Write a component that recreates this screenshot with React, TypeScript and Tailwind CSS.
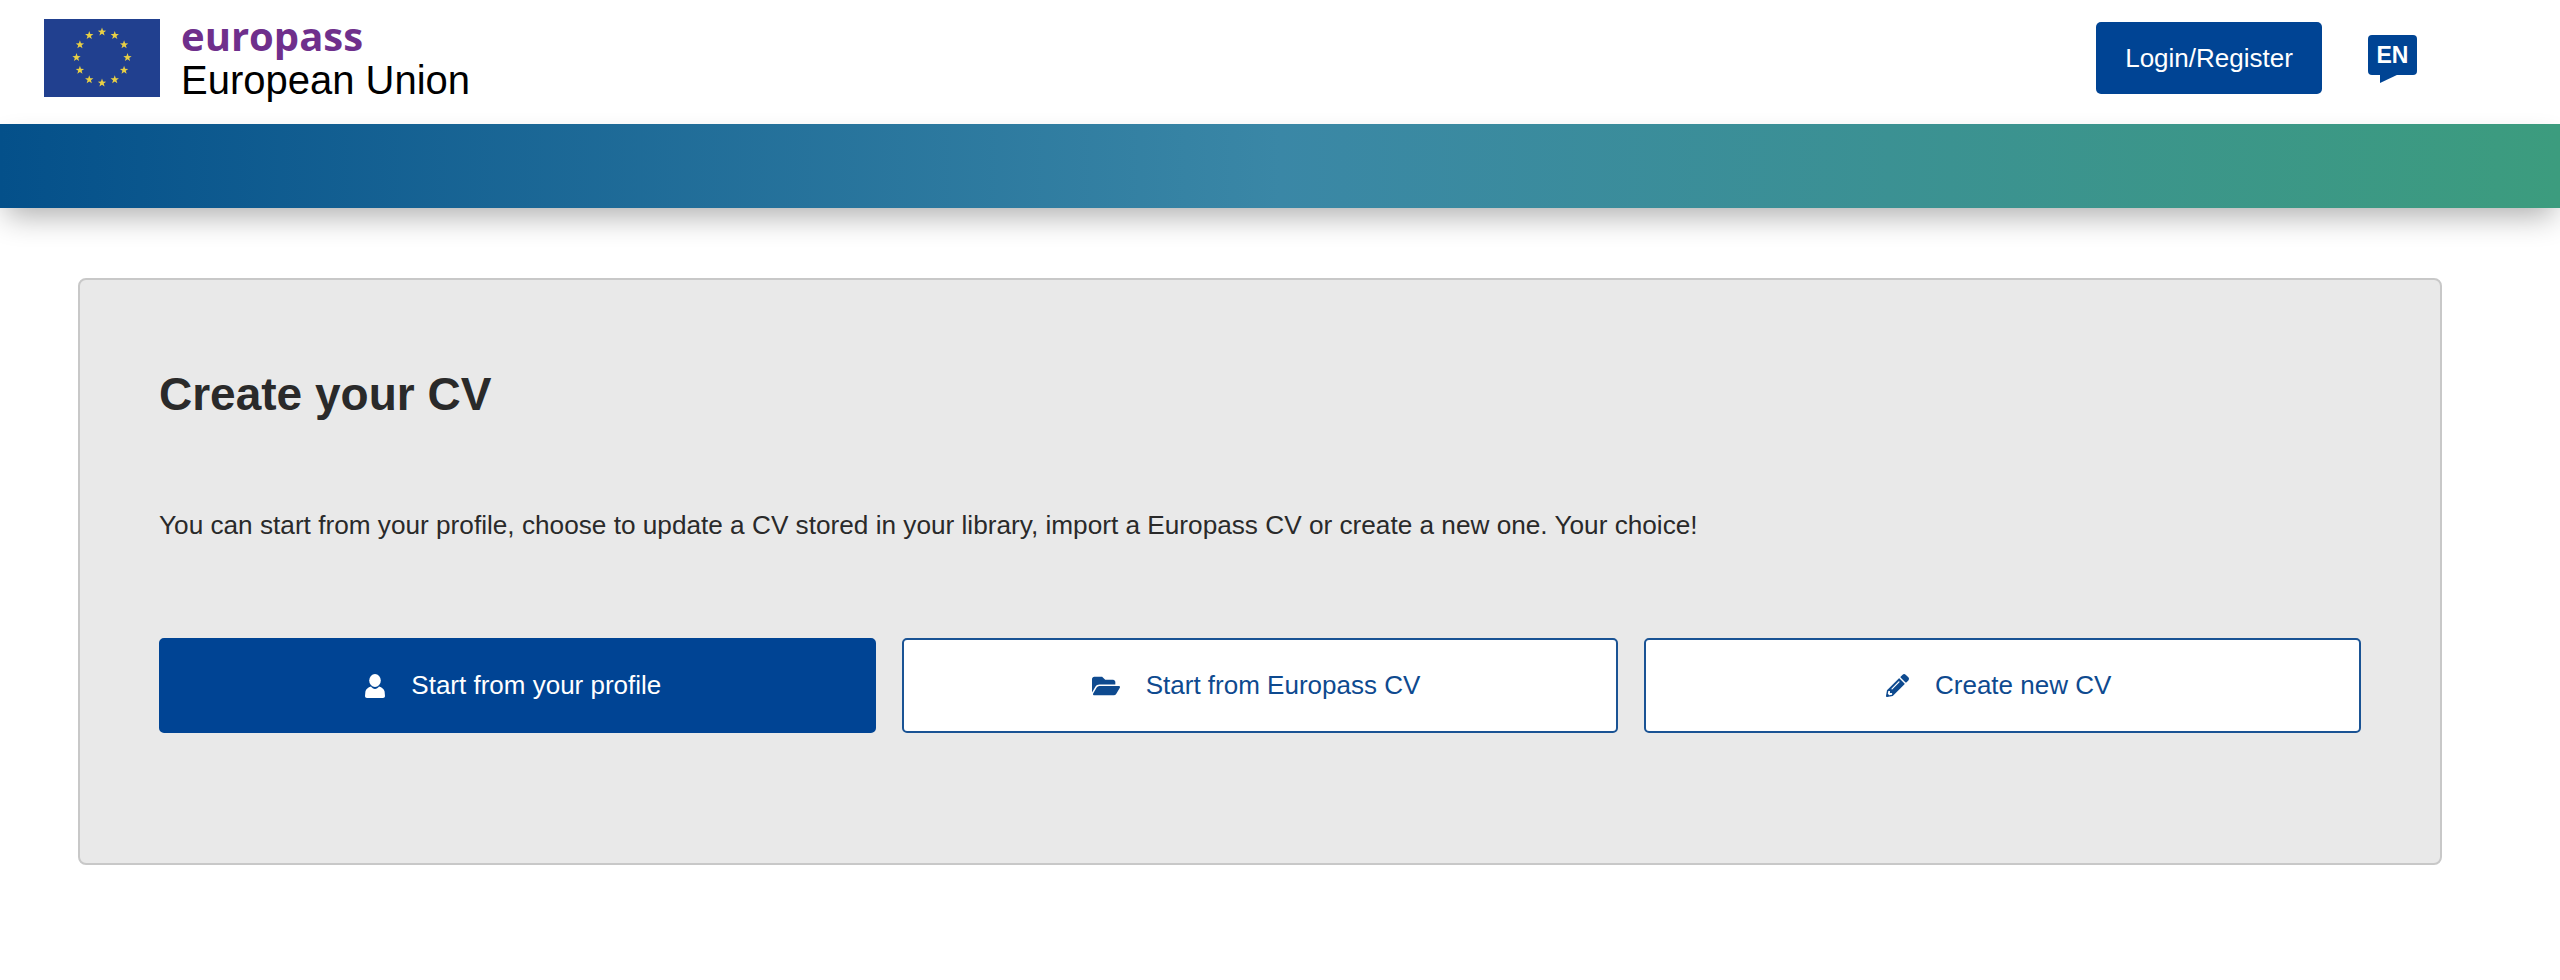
import React from 'react';
import { FaFolderOpen, FaPencilAlt } from 'react-icons/fa';

const starPoints = (cx: number, cy: number, outer: number, inner: number) => {
    const pts: string[] = [];
    for (let i = 0; i < 10; i++) {
        const r = i % 2 === 0 ? outer : inner;
        const a = (Math.PI / 5) * i - Math.PI / 2;
        pts.push(`${(cx + r * Math.cos(a)).toFixed(2)},${(cy + r * Math.sin(a)).toFixed(2)}`);
    }
    return pts.join(' ');
};

const EuFlag = () => (
    <svg width="116" height="78" viewBox="0 0 116 78" className="shrink-0">
        <rect width="116" height="78" fill="#21408f" />
        {Array.from({ length: 12 }).map((_, i) => {
            const a = (Math.PI / 6) * i;
            return (
                <polygon
                    key={i}
                    points={starPoints(58 + 25.5 * Math.sin(a), 38.5 - 25.5 * Math.cos(a), 4.4, 1.8)}
                    fill="#e8cf45"
                />
            );
        })}
    </svg>
);

const UserIcon = () => (
    <svg width="20" height="24" viewBox="0 0 20 24" fill="currentColor" className="shrink-0">
        <ellipse cx="10" cy="6.5" rx="5.8" ry="6.5" />
        <path d="M6 12.5C3 13.5 1 15 .4 17.5L0 22c0 1.2.8 2 2 2h16c1.2 0 2-.8 2-2l-.4-4.5C19 15 17 13.500 14 12.500c-1 1.500-2.500 2.500-4 2.500s-3-1-4-2.500z" />
    </svg>
);

const CvButton = ({ icon, label, primary }: { icon: React.ReactNode; label: string; primary?: boolean }) => (
    <button
        className={
            primary
                ? 'flex h-[95px] flex-1 items-center justify-center rounded-[5px] border-2 border-[#004494] bg-[#004494] pr-[8px] text-[26px] text-white'
                : 'flex h-[95px] flex-1 items-center justify-center rounded-[5px] border-2 border-[#1a5394] bg-white pr-[8px] text-[26px] text-[#0e4a8f]'
        }
    >
        {icon}
        <span className="ml-[26px]">{label}</span>
    </button>
);

export default function App() {
    return (
        <div className="min-h-[980px] bg-white font-['Liberation_Sans',Arial,sans-serif]">
            <header className="flex h-[124px] items-center justify-between pb-[8px] pl-[44px] pr-[143px]">
                <div className="flex items-center">
                    <EuFlag />
                    <div className="ml-[21px] flex flex-col">
                        <span className="font-['Open_Sans',sans-serif] text-[40px] font-bold leading-[44px] text-[#6f2f8c]">
                            europass
                        </span>
                        <span className="text-[40px] leading-[44px] text-black">European Union</span>
                    </div>
                </div>
                <div className="flex items-center gap-[46px]">
                    <button className="h-[72px] w-[226px] rounded-[5px] bg-[#004494] text-[26px] text-white">
                        Login/Register
                    </button>
                    <div className="relative mb-[6px] flex h-[40px] w-[49px] items-center justify-center rounded-[4px] bg-[#004494] text-[23px] font-bold text-white">
                        EN
                        <svg width="19" height="9" viewBox="0 0 19 9" className="absolute left-[12px] top-[39px]">
                            <path d="M0 0h19L0 9z" fill="#004494" />
                        </svg>
                    </div>
                </div>
            </header>

            <div className="h-[84px] bg-[linear-gradient(90deg,#04508a_0%,#3a87a6_50%,#3c9c7e_100%)] shadow-[0_14px_30px_-6px_rgba(0,0,0,0.32)]" />

            <main className="pl-[78px] pr-[118px] pt-[70px]">
                <section className="h-[587px] rounded-[8px] border-2 border-[#c8c8c8] bg-[#e9e9e9] px-[79px] pt-[85px]">
                    <h1 className="text-[46px] font-bold leading-[58px] text-[#2a2a2a]">Create your CV</h1>
                    <p className="mt-[84px] text-[26.2px] leading-[36px] text-[#2a2a2a]">
                        You can start from your profile, choose to update a CV stored in your library, import a Europass CV or create a new one. Your choice!
                    </p>
                    <div className="mt-[95px] flex gap-[26px]">
                        <CvButton primary icon={<UserIcon />} label="Start from your profile" />
                        <CvButton icon={<FaFolderOpen size={28} />} label="Start from Europass CV" />
                        <CvButton icon={<FaPencilAlt size={23} />} label="Create new CV" />
                    </div>
                </section>
            </main>
        </div>
    );
}
